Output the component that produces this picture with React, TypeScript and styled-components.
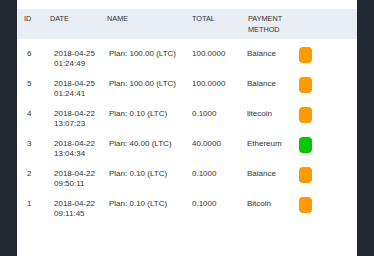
import styled, { createGlobalStyle } from 'styled-components';

const GlobalStyle = createGlobalStyle`
  html, body {
    margin: 0;
    padding: 0;
    background: #ffffff;
  }
  body {
    font-family: 'Liberation Sans', Arial, sans-serif;
    color: #333333;
  }
`;

const Layout = styled.div`
  display: flex;
  height: 256px;
  overflow: hidden;
`;

const SideBar = styled.div`
  width: 17px;
  flex-shrink: 0;
  background: #222932;
`;

const Panel = styled.div`
  flex: 1;
  background: #ffffff;
  padding-top: 9px;
`;

const Row = styled.div<{ $head?: boolean }>`
  display: grid;
  grid-template-columns: 30px 57px 85px 56px 51px 1fr;
  height: 30px;
  background: ${(p) => (p.$head ? '#e9eef5' : 'transparent')};
`;

const HeadCell = styled.div<{ $pad: number }>`
  padding: 5px 0 0 ${(p) => p.$pad}px;
  font-size: 7.3px;
  line-height: 10.5px;
  text-transform: uppercase;
  color: #333333;
`;

const Cell = styled.div<{ $pad: number }>`
  padding: 10px 0 0 ${(p) => p.$pad}px;
  font-size: 8px;
  line-height: 9.5px;
  color: #333333;
`;

const ButtonCell = styled.div`
  padding: 8px 0 0 3px;
`;

const StatusButton = styled.button<{ $color: string }>`
  display: block;
  width: 13px;
  height: 16px;
  padding: 0;
  border: none;
  border-radius: 4px;
  background: ${(p) => p.$color};
`;

interface ITransaction {
  id: number;
  date: string;
  time: string;
  name: string;
  total: string;
  method: string;
  status: 'pending' | 'done';
}

const transactions: ITransaction[] = [
  { id: 6, date: '2018-04-25', time: '01:24:49', name: 'Plan: 100.00 (LTC)', total: '100.0000', method: 'Balance', status: 'pending' },
  { id: 5, date: '2018-04-25', time: '01:24:41', name: 'Plan: 100.00 (LTC)', total: '100.0000', method: 'Balance', status: 'pending' },
  { id: 4, date: '2018-04-22', time: '13:07:23', name: 'Plan: 0.10 (LTC)', total: '0.1000', method: 'litecoin', status: 'pending' },
  { id: 3, date: '2018-04-22', time: '13:04:34', name: 'Plan: 40.00 (LTC)', total: '40.0000', method: 'Ethereum', status: 'done' },
  { id: 2, date: '2018-04-22', time: '09:50:11', name: 'Plan: 0.10 (LTC)', total: '0.1000', method: 'Balance', status: 'pending' },
  { id: 1, date: '2018-04-22', time: '09:11:45', name: 'Plan: 0.10 (LTC)', total: '0.1000', method: 'Bitcoin', status: 'pending' },
];

export default function App() {
  return (
    <>
      <GlobalStyle />
      <Layout>
        <SideBar />
        <Panel>
          <Row $head>
            <HeadCell $pad={7}>ID</HeadCell>
            <HeadCell $pad={3}>Date</HeadCell>
            <HeadCell $pad={3}>Name</HeadCell>
            <HeadCell $pad={3}>Total</HeadCell>
            <HeadCell $pad={3}>
              Payment
              <br />
              Method
            </HeadCell>
            <HeadCell $pad={3} />
          </Row>
          {transactions.map((t) => (
            <Row key={t.id}>
              <Cell $pad={10}>{t.id}</Cell>
              <Cell $pad={7}>
                {t.date}
                <br />
                {t.time}
              </Cell>
              <Cell $pad={5}>{t.name}</Cell>
              <Cell $pad={3}>{t.total}</Cell>
              <Cell $pad={2}>{t.method}</Cell>
              <ButtonCell>
                <StatusButton $color={t.status === 'done' ? '#00c800' : '#ff9900'} />
              </ButtonCell>
            </Row>
          ))}
        </Panel>
        <SideBar />
      </Layout>
    </>
  );
}
